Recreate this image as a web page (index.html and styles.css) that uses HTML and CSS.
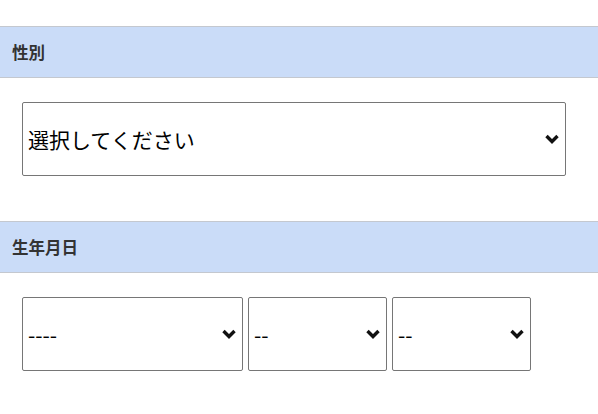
FILE: index.html
```html
<!DOCTYPE html>
<html lang="ja">
<head>
<meta charset="utf-8">
<link rel="stylesheet" href="styles.css">
</head>
<body>
<main class="form">
  <section class="field">
    <h2 class="field-title">性別</h2>
    <div class="field-body">
      <span class="select-wrap wide">
        <select class="select"><option>選択してください</option></select>
        <svg class="chev" viewBox="0 0 14 10" width="14" height="10"><path d="M1.5 2 L7 7.5 L12.5 2" fill="none" stroke="#111" stroke-width="3.4"/></svg>
      </span>
    </div>
  </section>
  <section class="field">
    <h2 class="field-title">生年月日</h2>
    <div class="field-body dates">
      <span class="select-wrap year">
        <select class="select"><option>----</option></select>
        <svg class="chev" viewBox="0 0 14 10" width="14" height="10"><path d="M1.5 2 L7 7.5 L12.5 2" fill="none" stroke="#111" stroke-width="3.4"/></svg>
      </span>
      <span class="select-wrap small">
        <select class="select"><option>--</option></select>
        <svg class="chev" viewBox="0 0 14 10" width="14" height="10"><path d="M1.5 2 L7 7.5 L12.5 2" fill="none" stroke="#111" stroke-width="3.4"/></svg>
      </span>
      <span class="select-wrap small">
        <select class="select"><option>--</option></select>
        <svg class="chev" viewBox="0 0 14 10" width="14" height="10"><path d="M1.5 2 L7 7.5 L12.5 2" fill="none" stroke="#111" stroke-width="3.4"/></svg>
      </span>
    </div>
  </section>
</main>
</body>
</html>
```
FILE: styles.css
```css
html, body {
  margin: 0;
  padding: 0;
  background: #fff;
}
body {
  font-family: "Noto Sans CJK JP", "Noto Sans", sans-serif;
  color: #333;
}
.form {
  padding-top: 26px;
}
.field-title {
  margin: 0;
  height: 50px;
  box-sizing: content-box;
  display: flex;
  align-items: center;
  padding: 0 12px;
  background: #cadcf8;
  border-top: 1px solid #c4c8cf;
  border-bottom: 1px solid #c4c8cf;
  font-size: 16.5px;
  font-weight: bold;
  color: #333;
}
.field-body {
  padding: 24px 22px 45px;
  display: flex;
  gap: 5px;
}
.field:last-child .field-body {
  padding-bottom: 20px;
}
.select-wrap {
  position: relative;
  display: block;
}
.select-wrap.wide { width: 544px; }
.select-wrap.year { width: 221px; }
.select-wrap.small { width: 139px; }
.select {
  appearance: none;
  -webkit-appearance: none;
  display: block;
  width: 100%;
  height: 74px;
  margin: 0;
  padding: 0 24px 0 5px;
  border: 1px solid #767676;
  border-radius: 2px;
  background: #fff;
  font-family: "Noto Sans CJK JP", "Noto Sans", sans-serif;
  font-size: 21px;
  color: #000;
}
.chev {
  position: absolute;
  right: 7px;
  top: 50%;
  margin-top: -5px;
  pointer-events: none;
}
```
